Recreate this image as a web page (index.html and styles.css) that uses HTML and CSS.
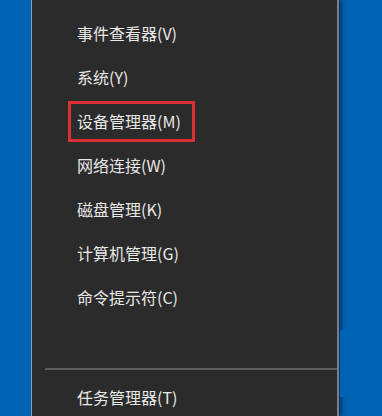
FILE: index.html
```html
<!DOCTYPE html>
<html lang="zh-CN">
<head>
  <meta charset="UTF-8">
  <title>快速链接菜单</title>
  <link rel="stylesheet" href="styles.css">
</head>
<body>

  <div class="menu">
    <div class="menu-item">事件查看器(V)</div>
    <div class="menu-item">系统(Y)</div>
    <div class="menu-item"><span class="mark">设备管理器(M)</span></div>
    <div class="menu-item">网络连接(W)</div>
    <div class="menu-item">磁盘管理(K)</div>
    <div class="menu-item">计算机管理(G)</div>
    <div class="menu-item">命令提示符(C)</div>
    <div class="menu-sep"></div>
    <div class="menu-item">任务管理器(T)</div>
  </div>

  <!-- 右边被截图盖住的一块 -->
  <div class="patch"></div>

</body>
</html>
```

FILE: styles.css
```css
body {
  margin: 0;
  height: 416px;
  overflow: hidden;
  background: #0063b4;
  font-family: "Noto Sans CJK SC", "Liberation Sans", sans-serif;
  position: relative;
}
.menu {
  margin-left: 31px;
  width: 308px;
  height: 416px;
  padding-top: 11px;
  box-sizing: border-box;
  background: #2b2b2b;
  border-left: 1px solid #8c9db3;
  border-right: 2px solid #7c7c84;
  box-shadow: 3px 0 4px rgba(0, 0, 0, 0.45);
}
.menu-item {
  height: 44px;
  line-height: 44px;
  padding-left: 45px;
  font-size: 16px;
  color: #e8e8e8;
}
.mark {
  display: inline-block;
  line-height: 35px;
  margin: 2px 0 0 -9px;
  padding: 0 11px 0 6px;
  border: 3px solid #dc3037;
}
.menu-sep {
  height: 2px;
  margin: 49px 0 5px 13px;
  background: #5e5e5e;
}
.patch {
  position: absolute;
  left: 340px;
  top: 330px;
  width: 42px;
  height: 67px;
  background: #0063b4;
}
```
